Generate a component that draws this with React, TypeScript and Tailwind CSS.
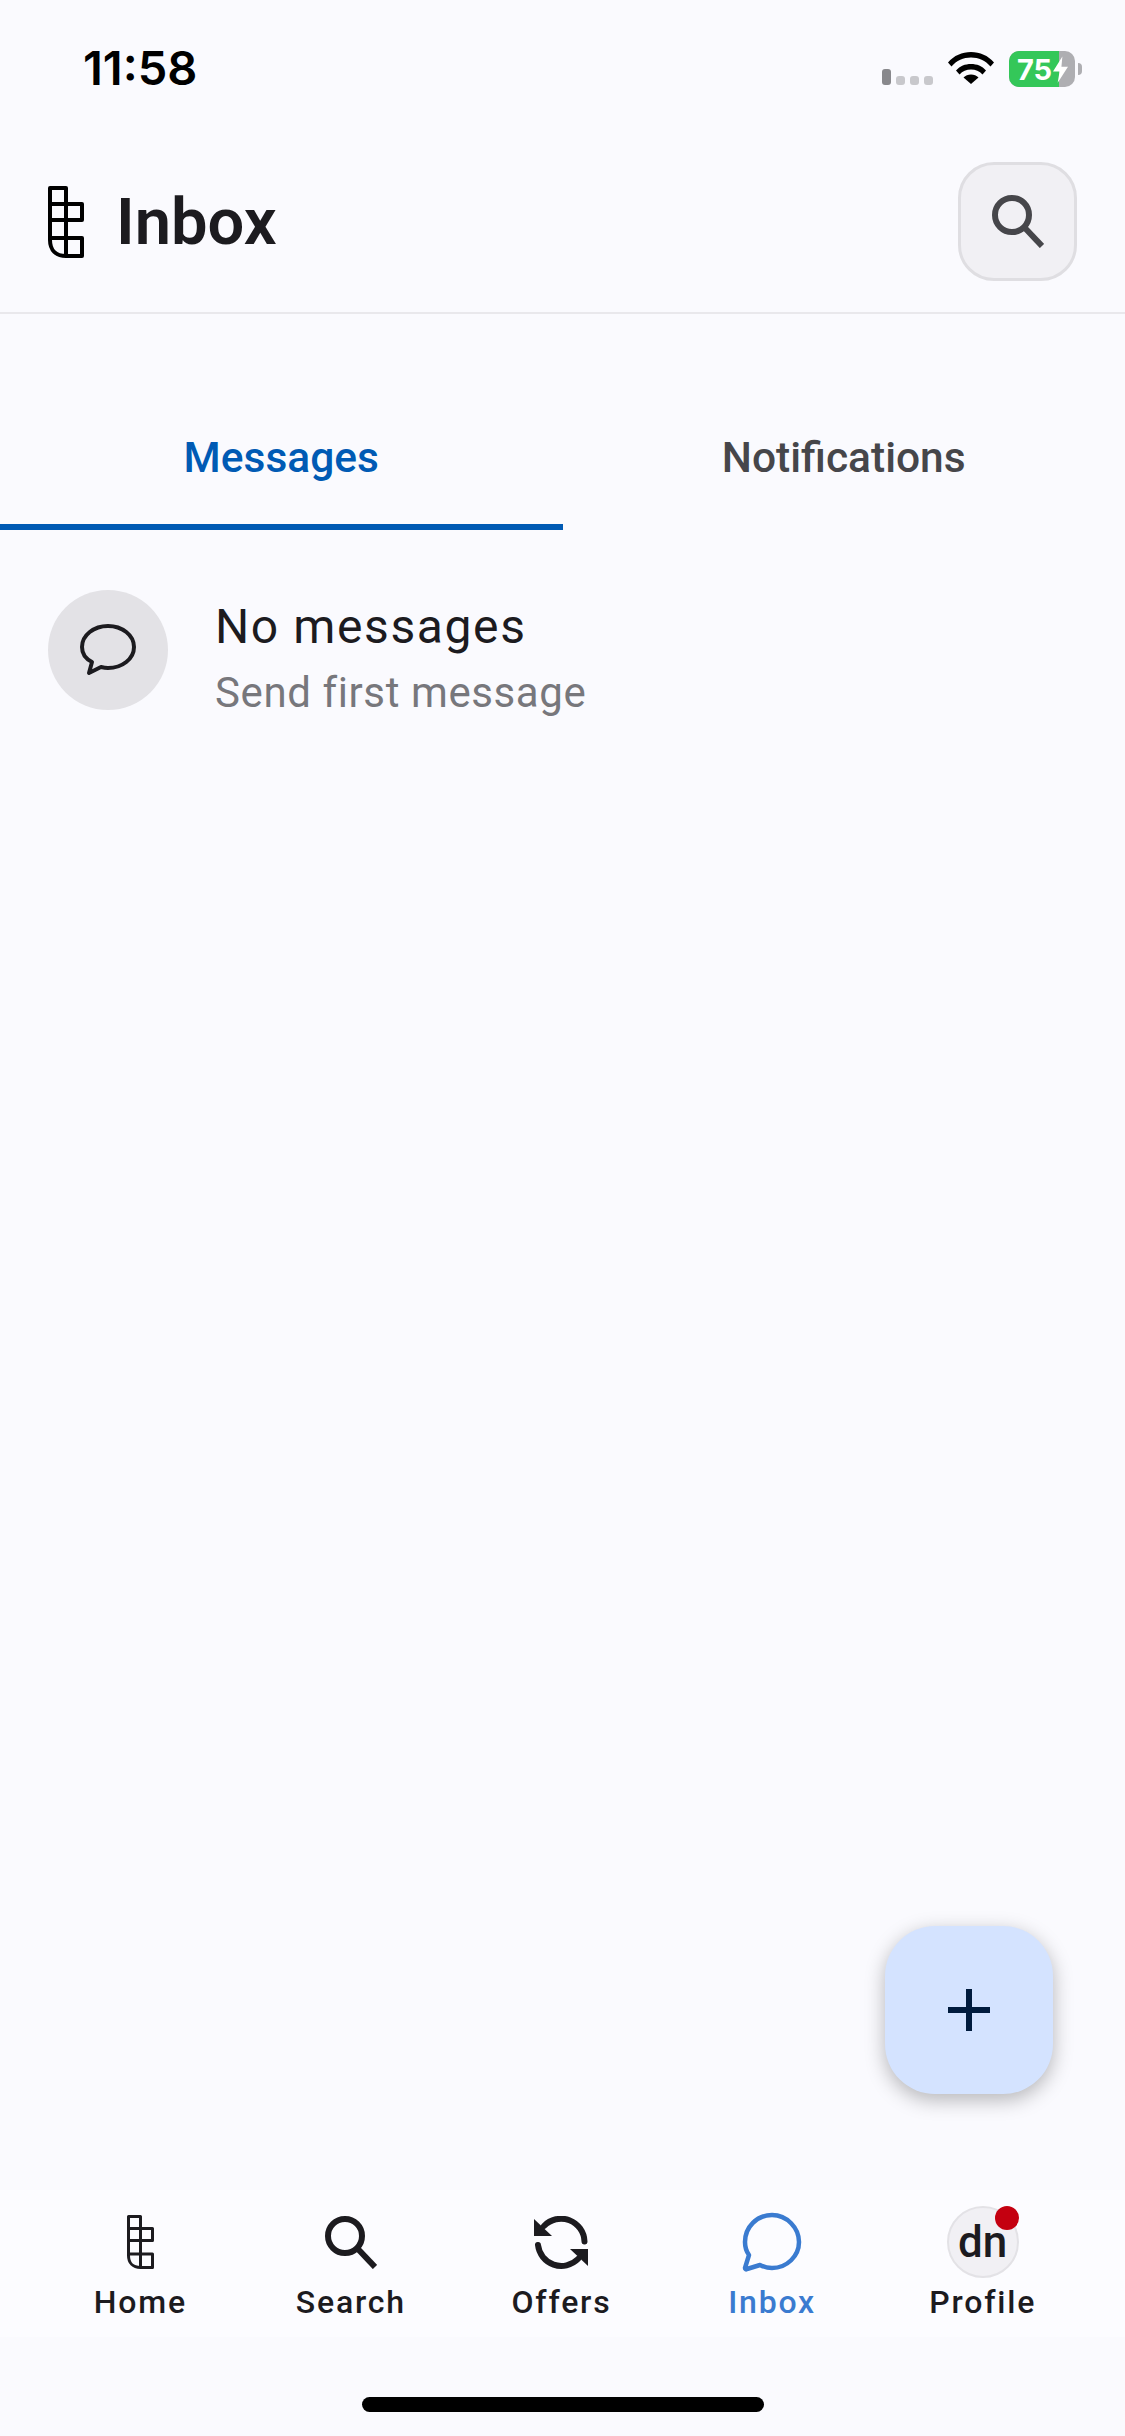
import React from "react";

const Logo = ({ className, sw }: { className: string; sw: number }) => (
  <svg viewBox="0 0 36 72" className={className} fill="none" stroke="currentColor" strokeWidth={sw} strokeLinejoin="round">
    <path d="M2 2H18V18H34V34H18V52H34V70H18C8 70 2 64 2 54Z" />
    <path d="M2 18H18V34H2M2 34V52H18M18 18V34M18 34V52M18 52V70" />
  </svg>
);

const SearchIcon = ({ className, sw }: { className: string; sw: number }) => (
  <svg viewBox="0 0 52 53" className={className} fill="none" stroke="currentColor" strokeWidth={sw}>
    <circle cx="20" cy="20" r="17" />
    <path d="M32 32L50 51" />
  </svg>
);

const NavItem = ({ icon, label, color = "text-[#1c1b1f]" }: { icon: React.ReactNode; label: string; color?: string }) => (
  <div className={`flex-1 flex flex-col items-center ${color}`}>
    <div className="h-[72px] flex items-center justify-center">{icon}</div>
    <span className="mt-[4px] text-[32px] leading-[40px] font-medium tracking-[1.8px]">{label}</span>
  </div>
);

export default function App() {
  return (
    <div className="relative w-[1125px] h-[2436px] bg-[#fafafe] flex flex-col font-['Roboto',sans-serif] text-[#1c1b1f] overflow-hidden">
      {/* Status bar */}
      <div className="h-[140px] shrink-0 flex items-start justify-between pl-[83px] pr-[43px]">
        <span className="mt-[40px] font-['Inter',sans-serif] font-semibold text-[47px] leading-[56px] text-black">11:58</span>
        <div className="flex items-start mt-[51px]">
          <div className="flex items-end gap-[5px] h-[34px] mr-[15px]">
            <div className="w-[9px] h-[16px] rounded-[3px] bg-[#88888c]" />
            <div className="w-[9px] h-[9px] rounded-[3px] bg-[#c8c8cc]" />
            <div className="w-[9px] h-[9px] rounded-[3px] bg-[#c8c8cc]" />
            <div className="w-[9px] h-[9px] rounded-[3px] bg-[#c8c8cc]" />
          </div>
          <svg viewBox="0 0 46 33" className="w-[46px] h-[33px] mr-[15px]" fill="black">
            <path d="M0 11.500C6 4.500 14 1 23 1s17 3.500 23 10.500l-3.500 4C37.500 9.500 30.500 6.500 23 6.500S8.500 9.500 3.500 15.500Z" />
            <path d="M8 19.500C12 15 17 13 23 13s11 2 15 6.500l-3.500 4C31.500 20.300 27.500 18.500 23 18.500s-8.500 1.800-11.500 5Z" />
            <path d="M15.500 26.500C17.500 24.500 20 23.500 23 23.500s5.500 1 7.500 3L23 33Z" />
          </svg>
          <div className="relative w-[66px] h-[36px] rounded-[10px] overflow-hidden bg-[#aeaeb2] flex">
            <div className="w-[50px] h-full bg-[#34c759]" />
            <div className="absolute inset-0 flex items-center pl-[8px] font-['Inter',sans-serif] text-white font-bold text-[29px] leading-none">
              75
              <svg viewBox="0 0 16 28" className="w-[15px] h-[27px] ml-[1px]" fill="white">
                <path d="M10 0L0 16H7L5 28L16 11H9Z" />
              </svg>
            </div>
          </div>
          <div className="w-[4px] h-[12px] mt-[12px] ml-[3px] rounded-r-full bg-[#aeaeb2]" />
        </div>
      </div>

      {/* Header */}
      <div className="h-[174px] shrink-0 flex items-center justify-between px-[48px] pb-[9px] border-b-[2px] border-[#e9e8ec]">
        <div className="flex items-center">
          <Logo className="w-[36px] h-[72px] text-black" sw={4} />
          <span className="ml-[32px] text-[65px] leading-[80px] font-semibold">Inbox</span>
        </div>
        <div className="w-[119px] h-[119px] rounded-[36px] bg-[#f1f0f4] border-[3px] border-[#dfdee2] flex items-center justify-center">
          <SearchIcon className="w-[52px] h-[53px] text-[#46464a]" sw={6} />
        </div>
      </div>

      {/* Tabs */}
      <div className="mt-[66px] flex h-[150px] shrink-0">
        <div className="flex-1 flex flex-col items-center justify-between text-[#005ab4]">
          <span className="mt-[52px] text-[42.5px] leading-[52px] font-medium">Messages</span>
          <div className="w-full h-[6px] bg-[#005ab4]" />
        </div>
        <div className="flex-1 flex flex-col items-center text-[#46464a]">
          <span className="mt-[52px] text-[42.5px] leading-[52px] font-medium">Notifications</span>
        </div>
      </div>

      {/* Row */}
      <div className="mt-[60px] flex items-start pl-[48px]">
        <div className="w-[120px] h-[120px] rounded-full bg-[#e3e2e6] flex items-center justify-center">
          <svg viewBox="0 0 56 52" className="w-[56px] h-[52px] text-[#1c1b1f]" fill="none" stroke="currentColor" strokeWidth="4" strokeLinejoin="round" strokeLinecap="round">
            <path d="M28 2C14 2 2 11 2 23c0 7 4 12 10 15l-3 11 12-6c2 .5 5 1 7 1 14 0 26-9 26-21S42 2 28 2Z" />
          </svg>
        </div>
        <div className="ml-[47px] pt-[7px] flex flex-col">
          <span className="text-[48px] leading-[60px] tracking-[1.6px] text-[#1c1b1f]">No messages</span>
          <span className="mt-[12px] text-[42px] leading-[48px] tracking-[0.6px] text-[#77777c]">Send first message</span>
        </div>
      </div>

      {/* FAB */}
      <div className="absolute left-[885px] top-[1926px] w-[168px] h-[168px] rounded-[50px] bg-[#d4e3ff] shadow-[0_6px_20px_rgba(0,0,0,0.28)] flex items-center justify-center">
        <svg viewBox="0 0 42 42" className="w-[42px] h-[42px] text-[#001b3d]" fill="currentColor">
          <path d="M18 0h6v18H42v6H24V42h-6V24H0v-6h18Z" />
        </svg>
      </div>

      {/* Bottom nav */}
      <div className="mt-auto">
        <div className="h-[147px] bg-[#fcfcff] flex pl-[35px] pr-[37px] pt-[16px]">
          <NavItem icon={<Logo className="w-[27px] h-[54px]" sw={4} />} label="Home" />
          <NavItem icon={<SearchIcon className="w-[52px] h-[53px]" sw={6} />} label="Search" />
          <NavItem
            icon={
              <svg viewBox="0 0 54 53" className="w-[54px] h-[53px]" fill="none" stroke="currentColor" strokeWidth="6" strokeLinecap="round">
                <path d="M10 10A23.500 23.500 0 0 1 50.500 25.500" />
                <path d="M4 29A23.500 23.500 0 0 0 44 43" />
                <path d="M0 3V20H18Z" fill="currentColor" stroke="none" />
                <path d="M54 50V33H36Z" fill="currentColor" stroke="none" />
              </svg>
            }
            label="Offers"
          />
          <NavItem
            color="text-[#3a7bd0]"
            icon={
              <svg viewBox="0 0 60 60" className="w-[60px] h-[60px]" fill="none" stroke="currentColor" strokeWidth="4.500" strokeLinejoin="round">
                <path d="M30 3C15 3 3 15 3 30c0 5 1 9 4 13l-4 13c0 1 1 2 2 1l13-4c4 2 8 3 12 3 15 0 27-12 27-26S45 3 30 3Z" />
              </svg>
            }
            label="Inbox"
          />
          <NavItem
            icon={
              <div className="relative w-[72px] h-[72px] rounded-full bg-[#f1f0f4] border-[2px] border-[#e3e2e6] flex items-center justify-center">
                <span className="text-[44px] leading-none font-medium text-[#1c1b1f]">dn</span>
                <div className="absolute -top-[2px] -right-[2px] w-[24px] h-[24px] rounded-full bg-[#c40010]" />
              </div>
            }
            label="Profile"
          />
        </div>
        <div className="h-[99px] flex justify-center pt-[60px]">
          <div className="w-[402px] h-[15px] rounded-full bg-black" />
        </div>
      </div>
    </div>
  );
}
